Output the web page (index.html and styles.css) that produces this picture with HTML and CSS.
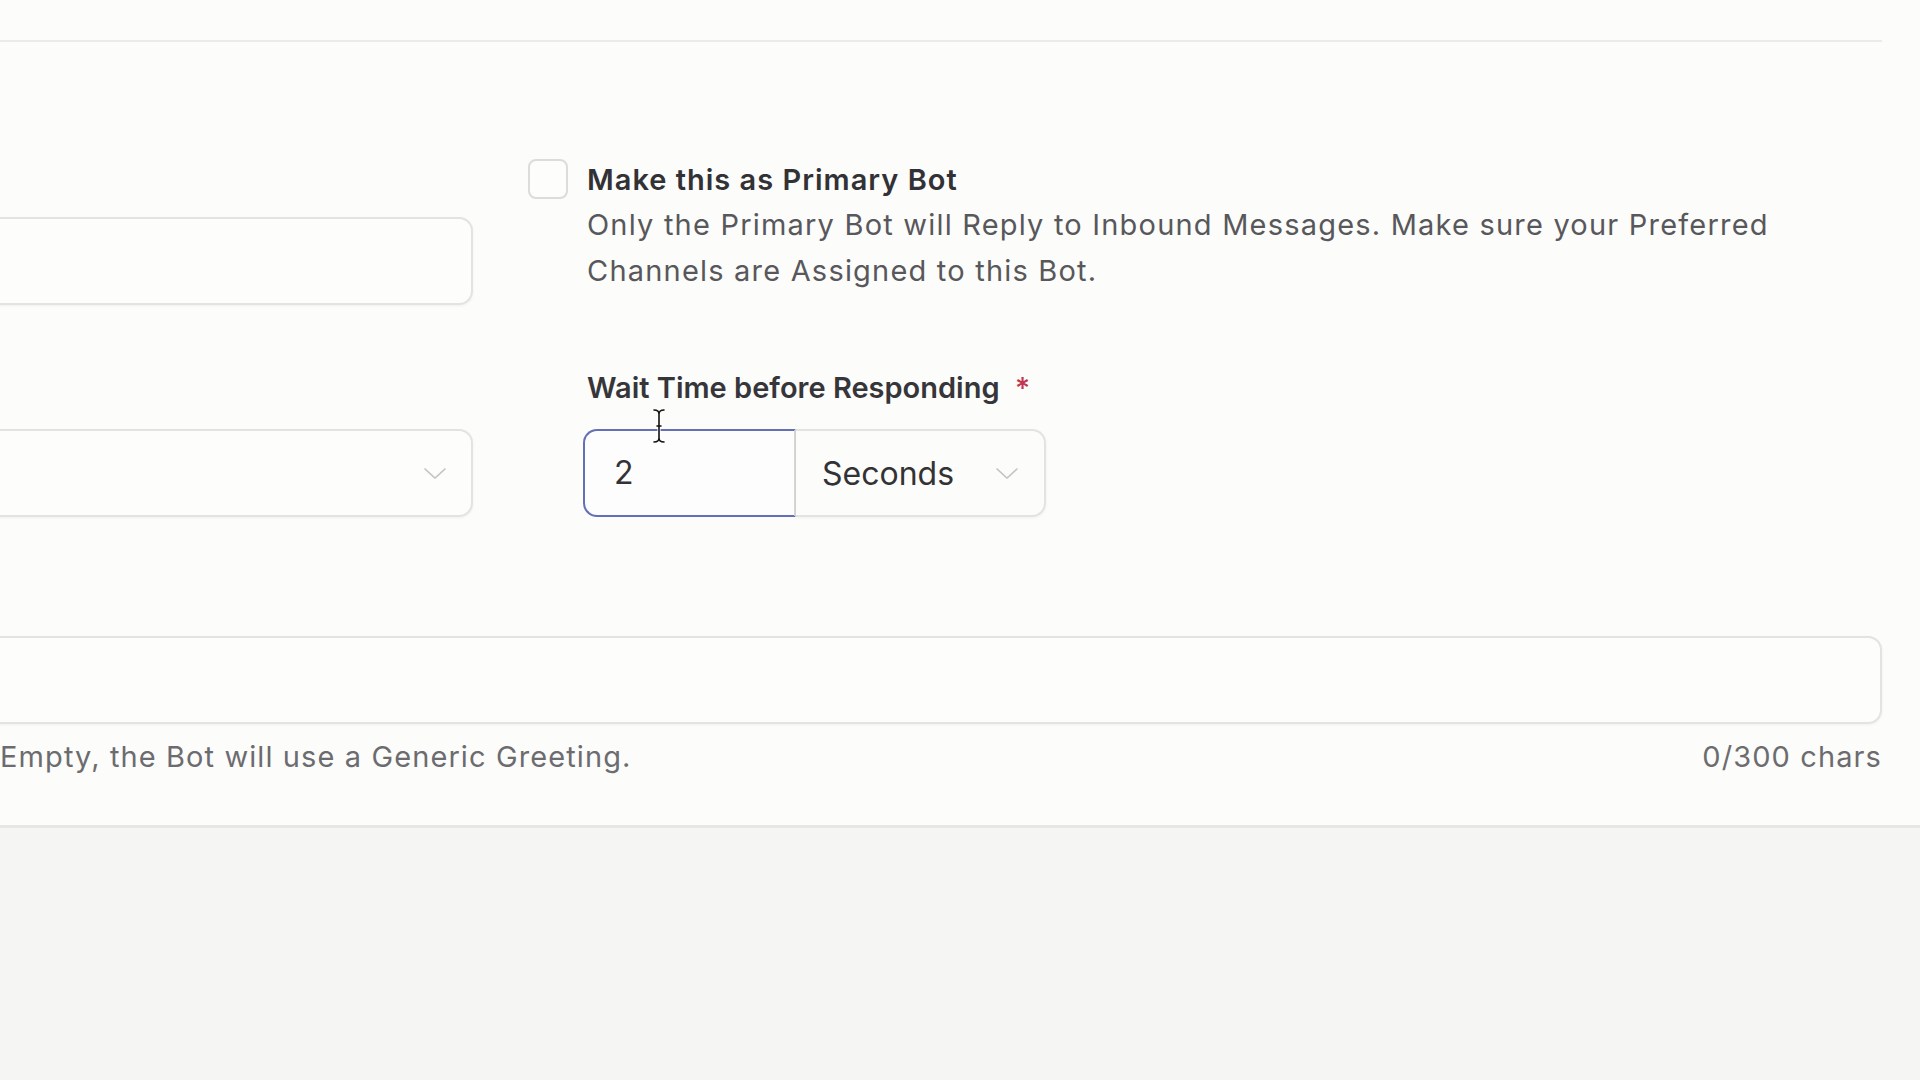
FILE: index.html
```html
<!DOCTYPE html>
<html lang="en">
<head>
<meta charset="utf-8">
<title>Bot Settings</title>
<link rel="stylesheet" href="styles.css">
</head>
<body>
<div class="page">
  <section class="card">
    <div class="card-head"></div>
    <div class="form">
      <div class="row row-top">
        <div class="col-left">
          <div class="field text-field"></div>
        </div>
        <div class="col-right">
          <div class="check">
            <span class="checkbox"></span>
            <div class="check-text">
              <div class="check-title">Make this as Primary Bot</div>
              <p class="check-desc">Only the Primary Bot will Reply to Inbound Messages. Make sure your Preferred Channels are Assigned to this Bot.</p>
            </div>
          </div>
        </div>
      </div>

      <div class="row row-mid">
        <div class="col-left">
          <div class="field select-field">
            <svg class="chevron" viewBox="0 0 24 12" width="22" height="11"><path d="M1 1 L12 11 L23 1" fill="none" stroke="currentColor" stroke-width="1.6" stroke-linecap="round" stroke-linejoin="round"/></svg>
          </div>
        </div>
        <div class="col-right wait-block">
          <div class="label">Wait Time before Responding <span class="req">*</span></div>
          <div class="input-group">
            <div class="num-input">2</div>
            <div class="unit-select">
              <span>Seconds</span>
              <svg class="chevron" viewBox="0 0 24 12" width="22" height="11"><path d="M1 1 L12 11 L23 1" fill="none" stroke="currentColor" stroke-width="1.6" stroke-linecap="round" stroke-linejoin="round"/></svg>
            </div>
            <svg class="ibeam" viewBox="0 0 14 36" width="14" height="36">
              <path d="M2 2 Q7 2 7 6 Q7 2 12 2 M7 6 L7 30 M2 34 Q7 34 7 30 Q7 34 12 34 M4 18 L10 18" fill="none" stroke="#fff" stroke-width="3.2" stroke-linecap="round"/>
              <path d="M2 2 Q7 2 7 6 Q7 2 12 2 M7 6 L7 30 M2 34 Q7 34 7 30 Q7 34 12 34 M5 18 L9 18" fill="none" stroke="#111" stroke-width="1.6" stroke-linecap="round"/>
            </svg>
          </div>
        </div>
      </div>

      <div class="row-full">
        <div class="field textarea-field"></div>
        <div class="helper-row">
          <span class="helper">Empty, the Bot will use a Generic Greeting.</span>
          <span class="counter">0/300 chars</span>
        </div>
      </div>
    </div>
  </section>
</div>
</body>
</html>
```

FILE: styles.css
```css
* { box-sizing: border-box; }

html, body {
  margin: 0;
  padding: 0;
  width: 1920px;
  height: 1080px;
  overflow: hidden;
  background: #f5f6f4;
  font-family: Inter, "Noto Sans", "Liberation Sans", sans-serif;
  color: #2f2f33;
}

.page {
  width: 1920px;
  height: 1080px;
}

.card {
  background: #fcfcfa;
  height: 828px;
  border-bottom: 3px solid #e6e6e4;
  overflow: hidden;
}

.card-head {
  height: 42px;
  margin-right: 38px;
  border-bottom: 2px solid #ebebe9;
}

.form {
  margin-left: -60px;
  margin-right: 38px;
  padding-top: 117px;
}

.row {
  display: grid;
  grid-template-columns: 533px 1fr;
  column-gap: 55px;
}

.row-mid {
  margin-top: 63px;
}

.field {
  height: 88px;
  border: 2px solid #e3e3e1;
  border-radius: 14px;
  background: #fdfdfc;
  box-shadow: 0 1px 3px rgba(0, 0, 0, 0.05);
}

.text-field {
  margin-top: 58px;
}

.select-field {
  margin-top: 61px;
  display: flex;
  align-items: center;
  justify-content: flex-end;
  padding-right: 25px;
}

.chevron {
  color: #c4c4c4;
  display: block;
}

/* checkbox block */
.check {
  display: flex;
  align-items: flex-start;
  column-gap: 19px;
}

.checkbox {
  flex: none;
  width: 40px;
  height: 40px;
  border: 2px solid #dcdcda;
  border-radius: 8px;
  background: #fdfdfc;
}

.check-text {
  padding-top: 1px;
}

.check-title {
  font-size: 29px;
  line-height: 40px;
  font-weight: 600;
  letter-spacing: 1px;
  color: #323236;
}

.check-desc {
  margin: 2px 0 0;
  font-size: 29px;
  line-height: 46px;
  letter-spacing: 1.2px;
  color: #58585c;
  max-width: 1250px;
}

/* wait time */
.wait-block {
  padding-left: 59px;
}

.label {
  font-size: 29px;
  line-height: 40px;
  font-weight: 600;
  color: #36363a;
}

.req {
  color: #c5354f;
  margin-left: 8px;
  font-weight: 500;
}

.input-group {
  position: relative;
  display: flex;
  width: 463px;
  height: 88px;
  margin-top: 21px;
  margin-left: -4px;
}

.num-input {
  width: 213px;
  height: 88px;
  border: 2px solid #6470b5;
  border-right-color: #d6d6d6;
  border-radius: 14px 0 0 14px;
  background: #fdfdfd;
  padding-left: 29px;
  font-size: 32px;
  line-height: 84px;
  color: #333336;
}

.unit-select {
  flex: 1;
  height: 88px;
  border: 2px solid #e3e3e1;
  border-left: none;
  border-radius: 0 14px 14px 0;
  background: #fcfcfb;
  display: flex;
  align-items: center;
  justify-content: space-between;
  padding: 0 26px 0 26px;
  font-size: 32px;
  color: #333336;
  box-shadow: 0 1px 3px rgba(0, 0, 0, 0.05);
}

.ibeam {
  position: absolute;
  left: 69px;
  top: -21px;
}

/* greeting */
.row-full {
  margin-top: 119px;
}

.helper-row {
  display: flex;
  justify-content: space-between;
  margin-top: 13px;
  font-size: 29px;
  line-height: 40px;
  letter-spacing: 1.1px;
  color: #6c6c70;
}

.helper {
  margin-left: 60px;
}
```
